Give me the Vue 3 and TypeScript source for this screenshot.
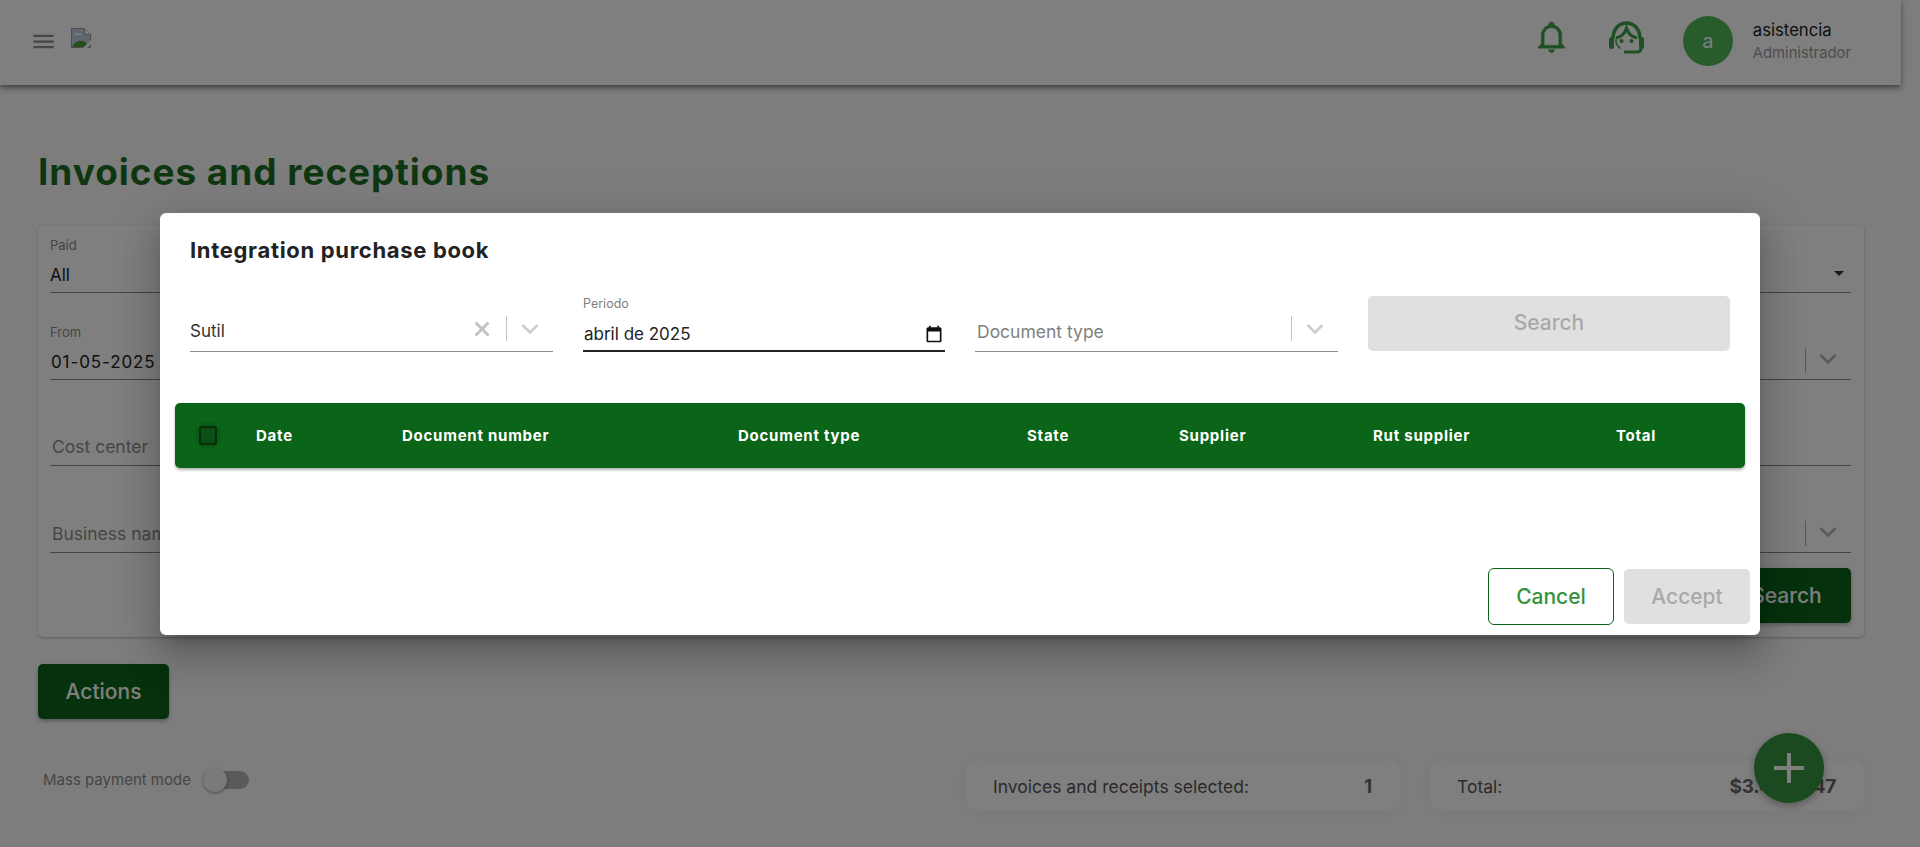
<script setup lang="ts">
interface BgField {
  label?: string;
  value?: string;
  placeholder?: string;
  spaced?: boolean;
}

const leftFields: BgField[] = [
  { label: "Paid", value: "All" },
  { label: "From", value: "01-05-2025", spaced: true },
  { placeholder: "Cost center" },
  { placeholder: "Business name" },
];

const columns = [
  { name: "Date", width: 146 },
  { name: "Document number", width: 336 },
  { name: "Document type", width: 289 },
  { name: "State", width: 152 },
  { name: "Supplier", width: 194 },
  { name: "Rut supplier", width: 243 },
  { name: "Total", width: 129 },
];
</script>

<template>
  <div class="screen">
    <div class="page">
      <header class="topbar">
        <div class="topbar-left">
          <svg class="menu" viewBox="0 0 24 24" width="27" height="27">
            <path d="M3 18h18v-2H3v2zm0-5h18v-2H3v2zm0-7v2h18V6H3z" />
          </svg>
          <svg class="broken" viewBox="0 0 20 20" width="20" height="20">
            <path d="M.5.5h13l6 6v13H.5z" fill="#c3cfe0" stroke="#9a9a9a" />
            <path d="M13.5.5v6h6" fill="#fff" stroke="#9a9a9a" />
            <path d="M3 7c1-2 3-2 4-1 1-1 3 0 3 1z" fill="#fff" />
            <path d="M1 19c2-5 8-8 13-5l5 5z" fill="#4b9e3c" />
            <path d="M12 20l8-8v4l-4 4z" fill="#fff" />
          </svg>
        </div>
        <div class="topbar-right">
          <svg class="bell" viewBox="0 0 24 24" width="35" height="35">
            <path
              d="M10 21H14C14 22.100 13.100 23 12 23S10 22.100 10 21M21 19V20H3V19L5 17V11C5 7.900 7 5.200 10 4.300V4C10 2.900 10.900 2 12 2S14 2.900 14 4V4.300C17 5.200 19 7.900 19 11V17L21 19M17 11C17 8.200 14.800 6 12 6S7 8.200 7 11V18H17V11Z"
            />
          </svg>
          <svg class="headset" viewBox="0 0 35 33" width="35" height="33" fill="none">
            <path d="M4 18C4 8 10 2 17.500 2S31 8 31 18" stroke-width="3.500" />
            <rect x="0" y="16" width="5" height="12" rx="2.500" class="solid" />
            <rect x="30" y="16" width="5" height="12" rx="2.500" class="solid" />
            <path d="M7 17C12 16 16 12 17.500 7 19 12 23 16 28 17" stroke-width="3" />
            <path d="M7 18V21C7.500 24 9.500 26 11.500 27.500" stroke-width="1.500" />
            <path d="M15 31H28C30.500 31 32 29.500 32 27" stroke-width="3" />
            <circle cx="12.500" cy="20" r="2" class="solid" />
            <circle cx="22.500" cy="20" r="2" class="solid" />
          </svg>
          <div class="avatar">a</div>
          <div class="user">
            <span class="user-name">asistencia</span>
            <span class="user-role">Administrador</span>
          </div>
        </div>
      </header>

      <main class="content">
        <h1 class="page-title">Invoices and receptions</h1>

        <section class="filters">
          <div v-for="(f, i) in leftFields" :key="i" class="row">
            <div class="bg-field">
              <span v-if="f.label" class="bg-label">{{ f.label }}</span>
              <span v-if="f.value" class="bg-value" :class="{ spaced: f.spaced }">{{ f.value }}</span>
              <span v-if="f.placeholder" class="bg-placeholder">{{ f.placeholder }}</span>
            </div>
            <div class="bg-field bg-right">
              <span v-if="i === 0" class="caret"></span>
              <template v-if="i === 1 || i === 3">
                <span class="bg-divider"></span>
                <svg class="chev bg-chev" viewBox="0 0 20 20" width="20" height="20">
                  <path d="M2.500 6 10 13.500 17.500 6" />
                </svg>
              </template>
            </div>
          </div>
          <div class="filters-actions">
            <button class="btn-dark search-btn">Search</button>
          </div>
        </section>

        <button class="btn-dark actions-btn">Actions</button>

        <div class="bottom">
          <div class="mass">
            <span>Mass payment mode</span>
            <span class="switch"><span class="thumb"></span></span>
          </div>
          <div class="stats">
            <div class="stat">
              <span>Invoices and receipts selected:</span>
              <b>1</b>
            </div>
            <div class="stat">
              <span>Total:</span>
              <b>$3.456.847</b>
            </div>
          </div>
        </div>
      </main>
    </div>

    <button class="fab">
      <svg viewBox="0 0 30 30" width="30" height="30">
        <path d="M13 0h4v13h13v4H17v13h-4V17H0v-4h13z" />
      </svg>
    </button>

    <div class="overlay">
      <div class="dialog">
        <h2 class="dialog-title">Integration purchase book</h2>

        <div class="dialog-filters">
          <div class="select">
            <span class="select-value">Sutil</span>
            <svg class="clear" viewBox="0 0 20 20" width="20" height="20">
              <path d="M3.500 3.500l13 13M16.500 3.500l-13 13" />
            </svg>
            <span class="divider"></span>
            <svg class="chev" viewBox="0 0 20 20" width="20" height="20">
              <path d="M2.500 6 10 13.500 17.500 6" />
            </svg>
          </div>

          <div class="date">
            <span class="date-label">Periodo</span>
            <div class="date-input">
              <span>abril de 2025</span>
              <svg viewBox="0 0 24 24" width="20" height="20">
                <path
                  d="M19 4h-1V2h-2v2H8V2H6v2H5c-1.100 0-2 .9-2 2v14c0 1.100.9 2 2 2h14c1.100 0 2-.9 2-2V6c0-1.100-.9-2-2-2zm0 16H5V9h14v11z"
                />
              </svg>
            </div>
          </div>

          <div class="select">
            <span class="select-placeholder">Document type</span>
            <span class="divider"></span>
            <svg class="chev" viewBox="0 0 20 20" width="20" height="20">
              <path d="M2.500 6 10 13.500 17.500 6" />
            </svg>
          </div>

          <button class="btn-disabled">Search</button>
        </div>

        <div class="table-head">
          <div class="check-cell"><span class="check"></span></div>
          <div
            v-for="col in columns"
            :key="col.name"
            class="th"
            :style="{ width: col.width + 'px' }"
          >
            {{ col.name }}
          </div>
        </div>

        <div class="dialog-actions">
          <button class="btn-outline">Cancel</button>
          <button class="btn-disabled accept">Accept</button>
        </div>
      </div>
    </div>
  </div>
</template>

<style scoped>
.screen {
  position: relative;
  width: 1920px;
  height: 847px;
  overflow: hidden;
  background: #fbfbfb;
  font-family: Inter, "Liberation Sans", sans-serif;
}

.page {
  width: 1901px;
}

.topbar {
  height: 85px;
  background: #fff;
  box-shadow: 0 2px 4px -1px rgba(0, 0, 0, 0.3), 0 4px 5px rgba(0, 0, 0, 0.2), 0 1px 10px rgba(0, 0, 0, 0.16);
  display: flex;
  justify-content: space-between;
  align-items: center;
  padding: 0 50px 3px 30px;
  box-sizing: border-box;
}

.topbar-left {
  display: flex;
  align-items: center;
  gap: 14px;
}

.menu path {
  fill: #8c8c8c;
}

.broken {
  margin-top: -6px;
}

.topbar-right {
  display: flex;
  align-items: center;
}

.bell {
  fill: #3fa14a;
  stroke: #3fa14a;
  stroke-width: 0.3;
  margin: 0 40px 10px 0;
}

.headset {
  stroke: #3fa14a;
  margin: 0 39px 7px 0;
}

.headset .solid {
  fill: #3fa14a;
  stroke: none;
}

.avatar {
  width: 50px;
  height: 50px;
  border-radius: 50%;
  background: #50b858;
  color: #fff;
  display: flex;
  align-items: center;
  justify-content: center;
  font-size: 20px;
  margin-right: 20px;
}

.user {
  display: flex;
  flex-direction: column;
  gap: 4px;
}

.user-name {
  font-size: 16.700px;
  color: #1a1a22;
}

.user-role {
  font-size: 14.800px;
  color: #9a9a9a;
}

.content {
  padding: 0 37px 0 38px;
}

.page-title {
  margin: 63px 0 0;
  font-size: 37px;
  line-height: 48px;
  font-weight: 700;
  color: #1c6f22;
  letter-spacing: 0.95px;
}

.filters {
  margin-top: 29px;
  height: 412px;
  box-sizing: border-box;
  background: #fff;
  border-radius: 5px;
  box-shadow: 0 1px 3px rgba(0, 0, 0, 0.25);
  padding: 0 13px 12px 12px;
  display: flex;
  flex-direction: column;
  gap: 18.600px;
}

.row {
  height: 68px;
  display: grid;
  grid-template-columns: 1fr 400px;
  gap: 40px;
}

.bg-field {
  border-bottom: 1px solid #8a8a8a;
  display: flex;
  flex-direction: column;
  justify-content: flex-end;
}

.bg-label {
  font-size: 13px;
  color: #8c8c8c;
  margin-bottom: 12px;
}

.bg-value {
  font-size: 17px;
  color: #222;
  padding-bottom: 7px;
}

.bg-value.spaced {
  padding-left: 1px;
  letter-spacing: 0.9px;
}

.bg-placeholder {
  font-size: 17.500px;
  color: #8c8c8c;
  padding: 0 0 8px 2px;
}

.bg-right {
  flex-direction: row;
  justify-content: flex-end;
  align-items: center;
}

.caret {
  width: 0;
  height: 0;
  border-left: 5px solid transparent;
  border-right: 5px solid transparent;
  border-top: 5px solid #333;
  margin: 30px 7px 0 0;
}

.bg-divider {
  width: 1px;
  height: 25px;
  background: #b0b0b0;
  margin: 30px 12px 0 0;
}

.chev {
  fill: none;
  stroke: #ccc;
  stroke-width: 2.500;
}

.bg-chev {
  margin: 28px 13px 0 0;
  stroke: #b4b4b4;
}

.filters-actions {
  display: flex;
  justify-content: flex-end;
  margin-top: -3px;
}

.btn-dark {
  border: 0;
  border-radius: 5px;
  background: #0b6518;
  color: #fff;
  font-family: inherit;
  font-size: 21px;
  font-weight: 500;
  height: 55px;
  box-shadow: 0 2px 4px rgba(0, 0, 0, 0.3);
}

.search-btn {
  width: 129px;
}

.actions-btn {
  display: block;
  width: 131px;
  margin-top: 27px;
}

.bottom {
  display: flex;
  justify-content: space-between;
  align-items: flex-start;
  margin-top: 42px;
}

.mass {
  display: flex;
  align-items: center;
  gap: 12px;
  font-size: 15px;
  color: #8c8c8c;
  padding: 9px 0 0 5px;
}

.switch {
  position: relative;
  display: block;
  width: 46px;
  height: 18px;
  border-radius: 9px;
  background: #b4b4b4;
}

.thumb {
  position: absolute;
  left: 0;
  top: -3px;
  width: 24px;
  height: 24px;
  border-radius: 50%;
  background: #f5f5f5;
  box-shadow: 0 1px 3px rgba(0, 0, 0, 0.4);
}

.stats {
  display: flex;
  gap: 30px;
}

.stat {
  width: 434px;
  height: 50px;
  box-sizing: border-box;
  padding: 0 28px 0 27px;
  border-radius: 10px;
  background: #fff;
  box-shadow: 0 0 16px rgba(0, 0, 0, 0.05);
  display: flex;
  align-items: center;
  justify-content: space-between;
  font-size: 17.500px;
  color: #555;
}

.stat b {
  font-size: 19px;
  font-weight: 700;
  color: #666;
  letter-spacing: -0.3px;
}

.fab {
  position: absolute;
  left: 1754px;
  top: 733px;
  width: 70px;
  height: 70px;
  padding: 0;
  border: 0;
  border-radius: 50%;
  background: #389440;
  box-shadow: 0 3px 8px rgba(0, 0, 0, 0.3);
  display: flex;
  align-items: center;
  justify-content: center;
}

.fab path {
  fill: #fff;
}

.overlay {
  position: absolute;
  inset: 0;
  background: rgba(0, 0, 0, 0.5);
  display: flex;
  justify-content: center;
  align-items: flex-start;
  padding-top: 213px;
  box-sizing: border-box;
}

.dialog {
  width: 1600px;
  height: 422px;
  box-sizing: border-box;
  background: #fff;
  border-radius: 6px;
  padding-top: 24px;
  box-shadow: 0 11px 15px -7px rgba(0, 0, 0, 0.2), 0 24px 38px 3px rgba(0, 0, 0, 0.14), 0 9px 46px 8px rgba(0, 0, 0, 0.12);
}

.dialog-title {
  margin: 0;
  padding-left: 30px;
  font-size: 22px;
  line-height: 26px;
  font-weight: 700;
  color: #222;
  letter-spacing: 0.68px;
}

.dialog-filters {
  display: grid;
  grid-template-columns: 363px 362px 363px 362px;
  gap: 30px;
  height: 56px;
  margin: 33px 30px 0;
}

.select {
  display: flex;
  align-items: center;
  align-self: end;
  height: 25px;
  padding-bottom: 10px;
  border-bottom: 1px solid #8c8c8c;
}

.select-value {
  flex: 1;
  padding-top: 4px;
  font-size: 17px;
  color: #333;
}

.select-placeholder {
  flex: 1;
  padding: 6px 0 0 2px;
  font-size: 17.500px;
  color: #808080;
}

.clear {
  fill: none;
  stroke: #c4c4c4;
  stroke-width: 3;
  margin-right: 14px;
}

.divider {
  width: 1px;
  height: 25px;
  background: #c4c4c4;
  margin-right: 13px;
}

.select .chev {
  margin-right: 13px;
}

.date {
  display: flex;
  flex-direction: column;
  align-self: end;
}

.date-label {
  font-size: 12.500px;
  color: #808080;
  margin-bottom: 11px;
}

.date-input {
  display: flex;
  align-items: center;
  justify-content: space-between;
  border-bottom: 2px solid #222;
  height: 30px;
  padding: 0 1px 5px;
  box-sizing: border-box;
  font-size: 17px;
  color: #222;
}

.date-input svg {
  fill: #111;
}

.btn-disabled {
  border: 0;
  border-radius: 5px;
  background: #e0e0e0;
  color: #a9a9a9;
  font-family: inherit;
  font-size: 21px;
  font-weight: 500;
  height: 55px;
  padding: 0 0 2px;
}

.table-head {
  display: flex;
  align-items: center;
  height: 65px;
  margin: 51px 15px 0;
  background: #0b6518;
  border-radius: 5px;
  box-shadow: 0 2px 3px rgba(0, 0, 0, 0.3);
}

.check-cell {
  width: 81px;
  padding-left: 24px;
  box-sizing: border-box;
}

.check {
  position: relative;
  display: block;
  width: 18px;
  height: 19px;
  box-sizing: border-box;
  border: 2px solid #07330e;
  border-radius: 3px;
  background: #0c5a17;
}

.check::after {
  content: "";
  position: absolute;
  inset: -6px;
  border-radius: 50%;
  background: rgba(0, 0, 0, 0.1);
}

.th {
  font-size: 15px;
  font-weight: 700;
  color: #fff;
  letter-spacing: 0.75px;
}

.dialog-actions {
  display: flex;
  justify-content: flex-end;
  align-items: center;
  gap: 10px;
  margin-top: 100px;
  padding-right: 10px;
}

.btn-outline {
  width: 126px;
  height: 57px;
  border: 1px solid #0b6518;
  border-radius: 6px;
  background: #fff;
  color: #35923d;
  font-family: inherit;
  font-size: 21px;
  font-weight: 500;
}

.accept {
  width: 126px;
  padding: 0;
}
</style>
